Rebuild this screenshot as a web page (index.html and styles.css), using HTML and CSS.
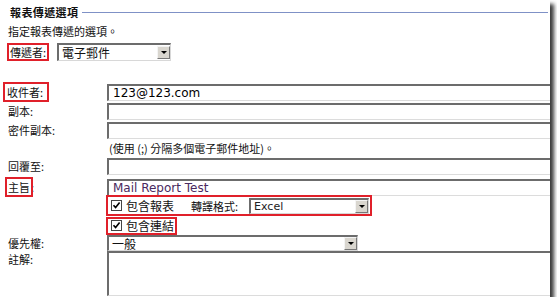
FILE: index.html
```html
<!DOCTYPE html>
<html lang="zh-Hant">
<head>
    <meta charset="UTF-8">
    <title>報表傳遞選項</title>
    <link rel="stylesheet" href="styles.css">
</head>
<body>
    <div class="frame">
        <div class="section-title">
            <span class="title-text">報表傳遞選項</span>
            <span class="title-line"></span>
        </div>
        <div class="intro">指定報表傳遞的選項。</div>
        <div class="deliver-row">
            <span class="mark mark-deliver">傳遞者:</span>
            <div class="select select-deliver">
                <span class="select-text">電子郵件</span>
                <span class="select-btn"><span class="arrow"></span></span>
            </div>
        </div>

        <div class="fields">
            <div class="label"><span class="mark mark-to">收件者:</span></div>
            <div class="field"><div class="input">123@123.com</div></div>

            <div class="label">副本:</div>
            <div class="field"><div class="input"></div></div>

            <div class="label">密件副本:</div>
            <div class="field"><div class="input"></div></div>

            <div class="label"></div>
            <div class="field hint">(使用 (;) 分隔多個電子郵件地址)。</div>

            <div class="label">回覆至:</div>
            <div class="field"><div class="input"></div></div>

            <div class="label"><span class="mark mark-subject">主旨</span>:</div>
            <div class="field"><div class="input subject">Mail Report Test</div></div>

            <div class="label"></div>
            <div class="field">
                <div class="mark include-box">
                    <span class="check"><svg width="9" height="9" viewBox="0 0 9 9"><path d="M1.5 4.2 L3.6 6.6 L7.6 1.6" fill="none" stroke="#000" stroke-width="1.6"/></svg></span>
                    <span class="check-label">包含報表</span>
                    <span class="format-label">轉譯格式:</span>
                    <div class="select select-format">
                        <span class="select-text">Excel</span>
                        <span class="select-btn"><span class="arrow"></span></span>
                    </div>
                </div>
            </div>

            <div class="label"></div>
            <div class="field">
                <div class="mark link-box">
                    <span class="check"><svg width="9" height="9" viewBox="0 0 9 9"><path d="M1.5 4.2 L3.6 6.6 L7.6 1.6" fill="none" stroke="#000" stroke-width="1.6"/></svg></span>
                    <span class="check-label">包含連結</span>
                </div>
            </div>

            <div class="label">優先權:</div>
            <div class="field">
                <div class="select select-priority">
                    <span class="select-text">一般</span>
                    <span class="select-btn"><span class="arrow"></span></span>
                </div>
            </div>

            <div class="label">註解:</div>
            <div class="field"><div class="input textarea"></div></div>
        </div>
    </div>
</body>
</html>
```

FILE: styles.css
```css
/* 報表傳遞選項 */
body {
    margin: 0;
    padding: 0;
    background-color: #fff;
    font-family: "Noto Sans CJK TC", "DejaVu Sans", sans-serif;
    font-size: 11px;
    color: #111;
}
.frame {
    width: 550px;
    height: 297px;
    background-color: #fff;
    overflow: hidden;
    box-shadow: 4px 4px 4px #3a3a3a;
}
.section-title {
    display: flex;
    align-items: center;
    padding: 3px 0 0 10px;
    height: 17px;
}
.title-text {
    font-weight: bold;
    letter-spacing: 0.4px;
}
.title-line {
    flex: 1;
    height: 1px;
    margin: 1px 2px 0 4px;
    background-color: #7f91c6;
}
.intro {
    padding: 3px 0 0 8px;
    height: 19px;
}
.deliver-row {
    display: flex;
    align-items: center;
    padding-left: 9px;
    height: 20px;
}
.mark {
    outline: 2px solid #e0202a;
    outline-offset: 0;
}
.mark-deliver {
    padding: 0 1px;
    line-height: 14px;
    margin-right: 10px;
}
.select {
    display: flex;
    align-items: center;
    height: 16px;
    background-color: #fff;
    border-top: 2px solid #6c6c6c;
    border-left: 2px solid #6c6c6c;
    border-right: 1px solid #d8d8d8;
    border-bottom: 1px solid #d8d8d8;
    box-sizing: border-box;
}
.select-text {
    flex: 1;
    padding-left: 3px;
    font-family: "DejaVu Sans", "Noto Sans CJK TC", sans-serif;
    font-size: 11px;
    line-height: 13px;
}
.select-deliver .select-text,
.select-priority .select-text {
    font-family: "Noto Sans CJK TC", sans-serif;
    font-size: 12px;
}
.select-btn {
    width: 13px;
    height: 13px;
    background-color: #d9d6cf;
    border-right: 1px solid #777;
    border-bottom: 1px solid #777;
    border-top: 1px solid #f4f4f4;
    border-left: 1px solid #f4f4f4;
    box-sizing: border-box;
    display: flex;
    align-items: center;
    justify-content: center;
}
.arrow {
    width: 0;
    height: 0;
    border-left: 3px solid transparent;
    border-right: 3px solid transparent;
    border-top: 3px solid #000;
}
.select-deliver {
    width: 114px;
    height: 18px;
}
.fields {
    display: grid;
    grid-template-columns: 107px 1fr;
    grid-template-rows: 19px 19px 19px 17px 21px 17px 21px 18px 16px 46px;
    margin-top: 22px;
}
.label {
    padding-left: 8px;
    line-height: 16px;
}
.field {
    min-width: 0;
}
.mark-to {
    margin-left: -3px;
    padding: 0 4px 0 2px;
}
.mark-subject {
    margin-left: -1px;
    padding: 0 1px;
}
.input {
    width: 448px;
    height: 17px;
    box-sizing: border-box;
    border-top: 2px solid #6c6c6c;
    border-left: 2px solid #6c6c6c;
    border-bottom: 1px solid #dcdcdc;
    padding-left: 4px;
    font-family: "DejaVu Sans", sans-serif;
    font-size: 12px;
    line-height: 14px;
    color: #000;
}
.subject {
    color: #4a2a60;
}
.hint {
    padding-left: 2px;
    line-height: 15px;
}
.include-box {
    display: flex;
    align-items: center;
    width: 262px;
    height: 17px;
    margin: 1px 0 0 1px;
}
.check {
    width: 9px;
    height: 9px;
    border: 1px solid #444;
    background-color: #fff;
    margin: 0 4px 0 3px;
    display: flex;
    align-items: center;
    justify-content: center;
}
.check-label {
    font-size: 12px;
}
.format-label {
    margin: 0 11px 0 17px;
}
.select-format {
    flex: 1;
    height: 16px;
    margin-right: 1px;
}
.select-format .select-text {
    font-weight: normal;
    color: #222;
}
.link-box {
    display: inline-flex;
    align-items: center;
    height: 14px;
    padding-right: 1px;
    margin: 1px 0 0 1px;
}
.select-priority {
    width: 251px;
}
.textarea {
    height: 45px;
    border-bottom: 1px solid #dcdcdc;
}
```
